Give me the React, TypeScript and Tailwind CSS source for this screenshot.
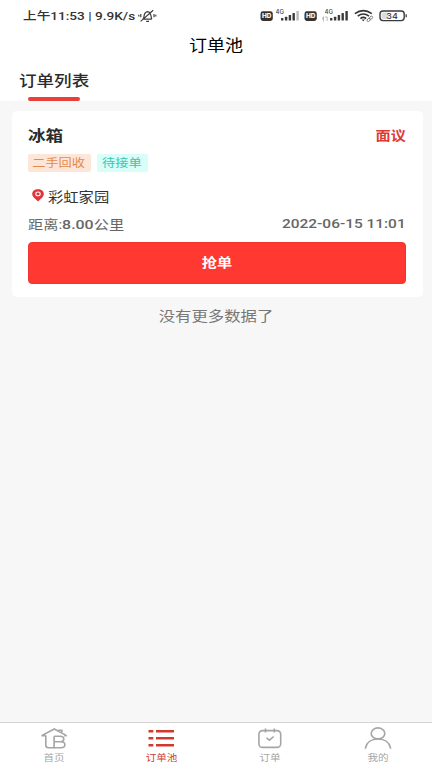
import React from 'react';

const CJK = "font-['Noto_Sans_CJK_SC',sans-serif]";
const LATIN = "font-['Roboto','Noto_Sans_CJK_SC',sans-serif]";

function Signal({ weak = false }: { weak?: boolean }) {
  return (
    <svg width="24" height="16" viewBox="0 0 24 16" className="shrink-0">
      <text x="-0.5" y="6" fontSize="6" textLength="8.5" lengthAdjust="spacingAndGlyphs" fontFamily="Inter, sans-serif" fontWeight="500" fill="#444">4G</text>
      <g fill="#3a3a3a">
        <rect x="5" y="10" width="2.4" height="2.6" rx="0.5" />
        <rect x="8.9" y="8.8" width="2.4" height="3.8" rx="0.5" />
        <rect x="12.7" y="7.1" width="2.4" height="5.5" rx="0.5" />
        <rect x="16.5" y="5" width="2.4" height="7.6" rx="0.5" />
        <rect x="20.4" y="3" width="2.4" height="9.6" rx="0.5" opacity={weak ? 0.35 : 1} />
      </g>
    </svg>
  );
}

function Hd() {
  return (
    <svg width="13" height="10" viewBox="0 0 13 10" className="-ml-[1px] shrink-0">
      <rect x="0.5" y="0.3" width="12.3" height="9.6" rx="2.4" fill="#333" />
      <text x="1.9" y="7.2" fontSize="6" textLength="9.4" lengthAdjust="spacingAndGlyphs" fontFamily="Inter, sans-serif" fontWeight="800" fill="#fff">HD</text>
    </svg>
  );
}

function StatusBar() {
  return (
    <div className="flex h-[31px] items-center pl-[23px] text-[#333]">
      <span className={`${LATIN} w-[113px] origin-left scale-x-[1.155] whitespace-nowrap text-[11.8px] font-medium leading-[16px]`}>
        上午11:53 | 9.9K/s
      </span>
      <svg width="20" height="16" viewBox="0 0 20 16" className="ml-[1px] shrink-0" fill="none" stroke="#3c3c3c" strokeWidth="1.2">
        <path d="M5.3 11.2h9.5M6.2 11C7.6 9.8 6 4 10.7 3.7 14.8 4 13.4 9.5 15 11M9.2 13.4h2.8M3.6 13.4 16.2 2.2" />
        <path d="M3.8 6v3.2M1.8 6.8v1.6M17 6v3.2M18.8 6.8v1.6" />
      </svg>
      <div className="ml-[103.5px] flex items-center">
        <Hd />
        <div className="ml-[3px] flex"><Signal weak /></div>
        <div className="ml-[5px] flex"><Hd /></div>
        <div className="ml-[5.5px] flex w-[27px] items-center justify-end">
          <svg width="6" height="6" viewBox="0 0 6 6" className="-mr-[3px] mt-[7px] shrink-0" fill="none" stroke="#aaa" strokeWidth="0.8">
            <path d="M0 3.5 1.5.7v4.8M3 1h2.2v4" />
          </svg>
          <Signal />
        </div>
        <svg width="20" height="14" viewBox="0 0 20 14" className="ml-[4.5px] shrink-0" fill="none" stroke="#333" strokeWidth="1.6">
          <path d="M.9 4.7Q9.3-1.4 17.8 4.7M3.7 7.2Q9.3 2.9 15 7.2M6.4 9.6Q9.3 7.2 12.2 9.6" />
          <path d="m7.6 10.6 1.7 1.7 1.7-1.7Z" fill="#333" stroke="none" />
          <g stroke="#777" strokeWidth="0.9"><ellipse cx="14.7" cy="10.9" rx="1.9" ry="1.3" transform="rotate(-45 14.7 10.9)" /><ellipse cx="17" cy="8.8" rx="1.9" ry="1.3" transform="rotate(-45 17 8.8)" /></g>
        </svg>
        <svg width="29" height="12" viewBox="0 0 29 12" className="ml-[5px] shrink-0">
          <rect x="1" y="1" width="24.2" height="9.6" rx="3" fill="#fff" stroke="#3a3a3a" strokeWidth="1.4" />
          <rect x="2.6" y="2.6" width="7" height="6.4" rx="1.5" fill="#ddd" />
          <path d="M27.2 4.3v3" stroke="#444" strokeWidth="1.3" />
          <text x="7.3" y="8.7" fontSize="8" textLength="11.5" lengthAdjust="spacingAndGlyphs" fontFamily="Inter, sans-serif" fontWeight="500" fill="#333">34</text>
        </svg>
      </div>
    </div>
  );
}

function OrderCard() {
  return (
    <section className="ml-[11.5px] mr-[9.5px] mt-[10px] h-[186px] rounded-[5px] bg-white pl-[16px] pr-[16.5px] pt-[13px]">
      <div className="flex h-[22px] items-center justify-between">
        <h2 className="origin-left scale-x-[1.17] text-[15px] font-bold leading-[22px] text-[#2b2b2b]">冰箱</h2>
        <span className="origin-right scale-x-[1.17] text-[13px] font-bold leading-[22px] text-[#de3a34]">面议</span>
      </div>
      <div className="mt-[8px] flex gap-[6px] text-[11.3px] leading-[17px]">
        <span className="flex h-[18px] w-[63px] justify-center rounded-[2px] bg-[#fde6d8] text-[#e58a4a]">
          <span className="scale-x-[1.17] whitespace-nowrap">二手回收</span>
        </span>
        <span className="flex h-[18px] w-[51px] justify-center rounded-[2px] bg-[#d9fdf8] text-[#35c8b2]">
          <span className="scale-x-[1.17] whitespace-nowrap">待接单</span>
        </span>
      </div>
      <div className="mt-[15px] flex h-[20px] items-center">
        <svg width="12" height="13" viewBox="0 0 12 13" className="mb-[3px] ml-[4px] mr-[4px]">
          <path d="M6 12.5 1.6 8.3a5.2 5.2 0 0 1-1.4-3.4C.2 2.2 2.6.3 6 .3s5.8 1.9 5.8 4.6a5.2 5.2 0 0 1-1.4 3.4Z" fill="#df3438" />
          <ellipse cx="6" cy="4.9" rx="2.2" ry="1.9" fill="#df3438" stroke="#fff" strokeWidth="1.1" />
        </svg>
        <span className="origin-left scale-x-[1.16] text-[13.2px] leading-[20px] text-[#333]">彩虹家园</span>
      </div>
      <div className="mt-[7px] flex h-[20px] items-center justify-between text-[#666]">
        <span className={`${LATIN} origin-left scale-x-[1.17] text-[13px] leading-[20px]`}>距离:<span className="text-[13.6px] font-medium">8.00</span>公里</span>
        <span className={`${LATIN} origin-right scale-x-[1.17] text-[13.2px] font-medium leading-[20px]`}>2022-06-15 11:01</span>
      </div>
      <button className="mt-[8px] flex h-[41.5px] w-full items-center justify-center rounded-[4px] border border-[#f0352f] bg-[#ff3832] text-white">
        <span className="-mt-[2px] scale-x-[1.17] text-[13px] font-bold leading-[20px]">抢单</span>
      </button>
    </section>
  );
}

function Tab({ label, active = false, children }: { label: string; active?: boolean; children: React.ReactNode }) {
  return (
    <div className={`flex flex-1 flex-col items-center pt-[3.5px] ${active ? 'text-[#cf3a2c]' : 'text-[#a5a5a5]'}`}>
      <svg width="28" height="24" viewBox="0 0 28 24" fill="none" stroke="currentColor" strokeWidth="1.6" className="shrink-0">{children}</svg>
      <span className="mt-[0.5px] scale-x-[1.17] text-[9px] leading-[14px]">{label}</span>
    </div>
  );
}

export default function App() {
  return (
    <div className={`${CJK} flex h-[768px] w-[432px] flex-col overflow-hidden bg-[#f7f7f7]`}>
      <header className="h-[101px] shrink-0 bg-white">
        <StatusBar />
        <h1 className="flex h-[26px] items-center justify-center text-black">
          <span className="scale-x-[1.17] text-[15.4px] leading-[22px]">订单池</span>
        </h1>
        <div className="flex h-[44px] flex-col items-start pl-[19px] pt-[12px]">
          <span className="origin-left scale-x-[1.17] text-[15px] font-medium leading-[22px] text-[#2b2b2b]">订单列表</span>
          <span className="ml-[9px] mt-[6px] h-[3.5px] w-[52px] shrink-0 rounded-full bg-[#ea3f38]" />
        </div>
      </header>
      <main className="flex flex-1 flex-col">
        <OrderCard />
        <p className="mt-[7px] flex justify-center text-[14px] leading-[22px] text-[#777]">
          <span className="scale-x-[1.17]">没有更多数据了</span>
        </p>
      </main>
      <nav className="flex h-[46px] shrink-0 border-t border-[#d4d4d4] bg-white">
        <Tab label="首页">
          <path d="M5.8 8.6H1.6L14.3 2 26.6 8.6h-2.4M19 4.4V3.2h2.8v2.7M5.8 8.6v9.5q0 2.7 2.7 2.7h5.6" />
          <path d="M14.1 9.3v11.5h7c5 0 5-6 0-6h-7M14.1 9.3h6.4c4.4 0 4.4 5.5 0 5.5" />
        </Tab>
        <Tab label="订单池" active>
          <path d="M0.5 4.3h4.8M8 4.3h18M0.5 11.3h4.8M8 11.3h18M0.5 18.3h4.8M8 18.3h18" strokeWidth="2.6" />
        </Tab>
        <Tab label="订单">
          <rect x="2.9" y="3.6" width="21.8" height="16.8" rx="3.7" />
          <path d="M9.5 1.4v4M18.3 1.4v4M10.5 10.8l3 2.3 4.2-3.6" />
        </Tab>
        <Tab label="我的">
          <ellipse cx="14" cy="6.4" rx="6.8" ry="5.5" />
          <path d="M1.5 21.8v-1C2.6 15.6 7.3 12 14 12s11.4 3.6 12.5 8.8v1" />
        </Tab>
      </nav>
    </div>
  );
}
